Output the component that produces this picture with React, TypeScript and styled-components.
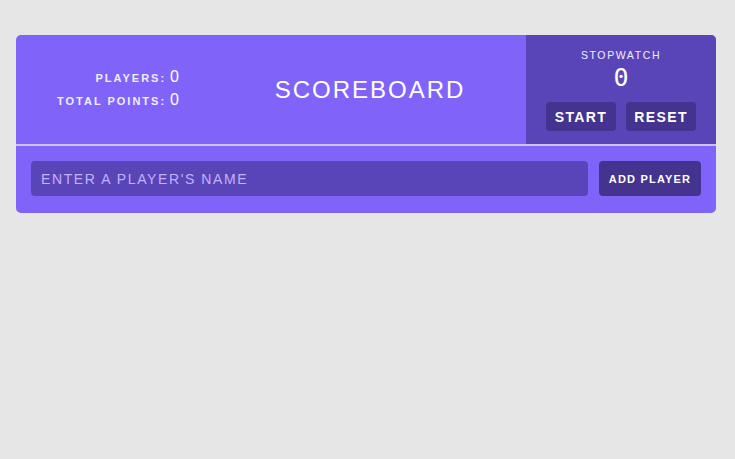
import React from "react";
import styled, { createGlobalStyle } from "styled-components";

const Global = createGlobalStyle`
  html, body { margin: 0; padding: 0; background: #e6e6e6; }
  body { font-family: "Liberation Sans", Arial, sans-serif; }
  * { box-sizing: border-box; }
`;

const Page = styled.div`
  padding: 35px 19px 0 16px;
`;

const Card = styled.div`
  width: 700px;
  background: #8064fa;
  border-radius: 5px;
  overflow: hidden;
`;

const Header = styled.header`
  display: grid;
  grid-template-columns: 198px 1fr 190px;
  height: 111px;
  border-bottom: 2px solid #cbc2f7;
`;

const Stats = styled.div`
  display: flex;
  flex-direction: column;
  justify-content: center;
  align-items: flex-end;
  padding-right: 35px;
  padding-bottom: 2px;
`;

const StatRow = styled.div`
  display: flex;
  align-items: baseline;
  color: #fff;
  line-height: 22px;
`;

const StatLabel = styled.span`
  font-size: 11px;
  letter-spacing: 2px;
  font-weight: bold;
  color: #f1edff;
  margin-right: 4px;
`;

const StatValue = styled.span`
  font-size: 16px;
  color: #fff;
`;

const Title = styled.h1`
  margin: 0;
  display: flex;
  align-items: center;
  justify-content: center;
  color: #fff;
  font-size: 24px;
  font-weight: normal;
  letter-spacing: 2px;
`;

const Stopwatch = styled.div`
  background: #5a45b8;
  display: flex;
  flex-direction: column;
  align-items: center;
  padding-top: 14px;
`;

const SwLabel = styled.div`
  color: #f1edff;
  font-size: 10.5px;
  letter-spacing: 1.6px;
  line-height: 12px;
`;

const SwTime = styled.div`
  color: #fff;
  font-family: "DejaVu Sans Mono", monospace;
  font-size: 25px;
  line-height: 30px;
  margin-top: 2px;
  margin-bottom: 9px;
`;

const SwButtons = styled.div`
  display: flex;
  gap: 10px;
`;

const DarkButton = styled.button<{ $small?: boolean }>`
  border: none;
  border-radius: 4px;
  background: #44338f;
  color: #fff;
  font-family: "Liberation Sans", Arial, sans-serif;
  font-weight: bold;
  cursor: pointer;
  font-size: ${(p) => (p.$small ? "11px" : "14px")};
  letter-spacing: ${(p) => (p.$small ? "1.2px" : "1.4px")};
  width: ${(p) => (p.$small ? "102px" : "70px")};
  height: ${(p) => (p.$small ? "35px" : "29px")};
  padding: 0;
`;

const Form = styled.form`
  display: flex;
  gap: 11px;
  padding: 15px 15px 17px;
`;

const Input = styled.input`
  flex: 1;
  height: 35px;
  border: none;
  border-radius: 4px;
  background: #5a45b8;
  color: #fff;
  padding: 0 10px;
  font-family: "Liberation Sans", Arial, sans-serif;
  font-size: 14px;
  letter-spacing: 1.6px;
  outline: none;
  &::placeholder { color: #c0b2ff; }
`;

export default function App() {
  return (
    <>
      <Global />
      <Page>
        <Card>
          <Header>
            <Stats>
              <StatRow>
                <StatLabel>PLAYERS:</StatLabel>
                <StatValue>0</StatValue>
              </StatRow>
              <StatRow>
                <StatLabel>TOTAL POINTS:</StatLabel>
                <StatValue>0</StatValue>
              </StatRow>
            </Stats>
            <Title>SCOREBOARD</Title>
            <Stopwatch>
              <SwLabel>STOPWATCH</SwLabel>
              <SwTime>0</SwTime>
              <SwButtons>
                <DarkButton type="button">START</DarkButton>
                <DarkButton type="button">RESET</DarkButton>
              </SwButtons>
            </Stopwatch>
          </Header>
          <Form onSubmit={(e) => e.preventDefault()}>
            <Input placeholder="ENTER A PLAYER'S NAME" />
            <DarkButton $small type="submit">ADD PLAYER</DarkButton>
          </Form>
        </Card>
      </Page>
    </>
  );
}
